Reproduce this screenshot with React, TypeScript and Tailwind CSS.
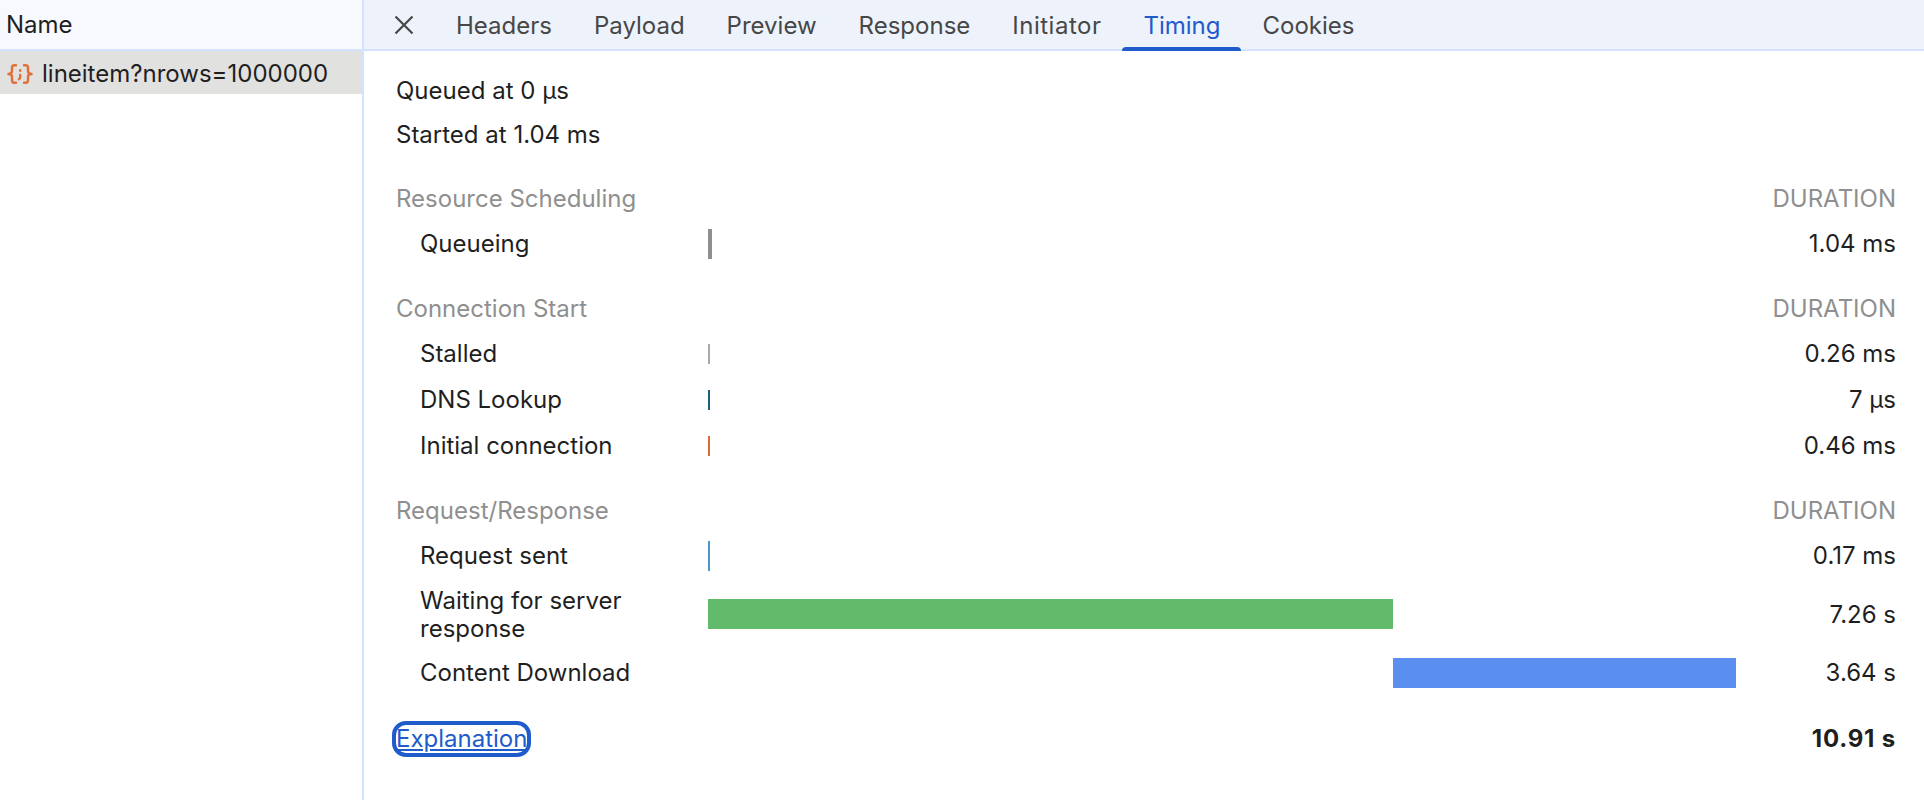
import { ReactNode } from "react";

const tabs = ["Headers", "Payload", "Preview", "Response", "Initiator", "Timing", "Cookies"];

function JsonIcon() {
  return (
    <svg viewBox="0 0 26 20" className="h-5 w-[26px] shrink-0 text-[#e0703a]" fill="none" stroke="currentColor" strokeWidth="2.4" strokeLinecap="round" strokeLinejoin="round">
      <path d="M9 1.2H7.5C6 1.2 5 2 5 3.5V7c0 1.5-1.2 3-3.6 3 2.4 0 3.6 1.5 3.6 3v3.5c0 1.5 1 2.3 2.5 2.3H9" />
      <path d="M17 1.2h1.5c1.5 0 2.5.8 2.5 2.3V7c0 1.5 1.2 3 3.6 3-2.4 0-3.6 1.5-3.6 3v3.5c0 1.5-1 2.3-2.5 2.3H17" />
      <path d="M13.2 6.2v.5" />
      <path d="M13.2 11v2.2c0 .8-.4 1.5-1.4 2" />
    </svg>
  );
}

function CloseIcon() {
  return (
    <svg viewBox="0 0 20 20" className="h-5 w-5" fill="none" stroke="#474747" strokeWidth="2.2">
      <path d="M1.5 1.5l17 17M18.5 1.5l-17 17" />
    </svg>
  );
}

function Title({ children }: { children: string }) {
  return (
    <div className="flex h-11 items-center justify-between text-[#8f8f8f]">
      <span>{children}</span>
      <span>DURATION</span>
    </div>
  );
}

function Row({ label, value, tall, children }: { label: ReactNode; value: string; tall?: boolean; children: ReactNode }) {
  return (
    <div className={`flex items-center ${tall ? "h-[71px]" : "h-[46px]"}`}>
      <div className="w-[312px] pl-6 leading-7">{label}</div>
      <div className="flex w-[1028px] items-center">{children}</div>
      <div className="flex-1 text-right">{value}</div>
    </div>
  );
}

export default function App() {
  return (
    <div className="flex h-[800px] w-[1924px] overflow-hidden bg-white font-[family-name:Inter,sans-serif] text-[24px] text-[#1f1f1f]">
      <div className="w-[362px] shrink-0">
        <div className="flex h-[51px] items-center border-b-2 border-[#d3e3fd] bg-[#f8f9ff] pl-[6px]">Name</div>
        <div className="flex h-[43px] items-center gap-[9px] bg-[#e1e1df] pl-[7px] pt-[2px]">
          <JsonIcon />
          <span>lineitem?nrows=1000000</span>
        </div>
      </div>
      <div className="w-[2px] shrink-0 bg-[#d3e3fd]" />
      <div className="flex-1">
        <div className="flex h-[51px] items-center border-b-2 border-[#d3e3fd] bg-[#edf2fb] pl-[30px] text-[#474747]">
          <CloseIcon />
          <div className="ml-[21px] flex h-full">
            {tabs.map((tab) => (
              <div
                key={tab}
                className={`relative flex items-center px-[21px] pt-[2px] ${tab === "Timing" ? "text-[#1f5bcb]" : ""} ${tab === "Initiator" ? "tracking-[0.5px]" : ""}`}
              >
                {tab}
                {tab === "Timing" && <div className="absolute inset-x-0 -bottom-[2px] h-[4px] rounded-t bg-[#1f5bcb]" />}
              </div>
            ))}
          </div>
        </div>
        <div className="pl-8 pr-7 pt-[18px]">
          <div className="flex h-11 items-center">Queued at 0 µs</div>
          <div className="flex h-11 items-center">Started at 1.04 ms</div>
          <div className="pt-5">
            <Title>Resource Scheduling</Title>
            <Row label="Queueing" value="1.04 ms">
              <div className="h-[30px] w-1 bg-[#8f8f8f]" />
            </Row>
          </div>
          <div className="pt-5">
            <Title>Connection Start</Title>
            <Row label="Stalled" value="0.26 ms">
              <div className="h-5 w-[2px] bg-[#a8a8a8]" />
            </Row>
            <Row label="DNS Lookup" value="7 µs">
              <div className="h-5 w-[2px] bg-[#1f6079]" />
            </Row>
            <Row label="Initial connection" value="0.46 ms">
              <div className="h-5 w-[2px] bg-[#dc6b34]" />
            </Row>
          </div>
          <div className="pt-5">
            <Title>Request/Response</Title>
            <Row label="Request sent" value="0.17 ms">
              <div className="h-[30px] w-[2px] bg-[#4b9ac5]" />
            </Row>
            <Row label="Waiting for server response" value="7.26 s" tall>
              <div className="-mt-[2px] h-[30px] w-[685px] bg-[#61bb6b]" />
            </Row>
            <Row label="Content Download" value="3.64 s">
              <div className="ml-[685px] h-[30px] w-[343px] bg-[#5a8fef]" />
            </Row>
          </div>
          <div className="mt-[25px] flex items-center justify-between">
            <a href="#" className="rounded-[10px] leading-7 text-[#1f5bcb] underline outline-[4px] outline-[#1f5bcb]">
              Explanation
            </a>
            <span className="font-bold tracking-[0.8px]">10.91 s</span>
          </div>
        </div>
      </div>
    </div>
  );
}
